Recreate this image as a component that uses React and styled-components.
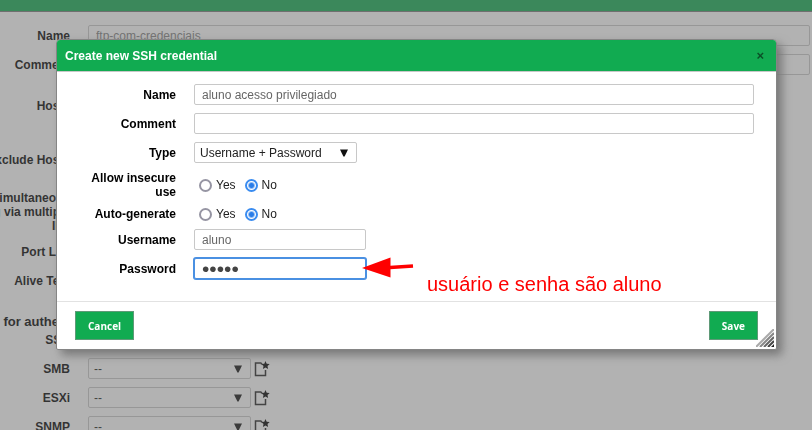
import React, { useState } from "react";
import styled, { createGlobalStyle, css } from "styled-components";

const scanners = ["SMB", "ESXi", "SNMP"];

const SelectField = ({ id, options }) => (
	<SelectWrap>
		<Select id={id}>
			{options.map((o) => (
				<option key={o}>{o}</option>
			))}
		</Select>
		<Arrow viewBox="0 0 8 8" aria-hidden="true">
			<path d="M0 0.5h8L4.6 7.5h-1.2z" fill="#111" />
		</Arrow>
	</SelectWrap>
);

const YesNo = ({ name, label }) => {
	const [value, setValue] = useState("No");

	return (
		<Row role="radiogroup" aria-labelledby={name}>
			<Label as="span" id={name}>
				{label}
			</Label>
			<Radios>
				{["Yes", "No"].map((o) => (
					<RadioLabel key={o}>
						<Radio
							type="radio"
							name={name}
							checked={value === o}
							onChange={() => setValue(o)}
						/>
						{o}
					</RadioLabel>
				))}
			</Radios>
		</Row>
	);
};

const NewIcon = () => (
	<svg width="16" height="16" viewBox="0 0 16 16" aria-hidden="true">
		<path
			d="M7.500 2H1.500v12.500h10V9M7.500 2v1.500"
			fill="none"
			stroke="#222"
			strokeWidth="1.500"
		/>
		<path
			d="M11.500 0l1.200 2.700 3 .3-2.200 2 .6 3-2.600-1.500-2.600 1.500.6-3-2.200-2 3-.3z"
			fill="#000"
		/>
	</svg>
);

const TargetForm = () => (
	<Page>
		<TopBar />
		<Form>
			<Rows>
				<PageRow>
					<Label htmlFor="target-name">Name</Label>
					<Input id="target-name" defaultValue="ftp-com-credenciais" $faded />
				</PageRow>
				<PageRow>
					<Label htmlFor="target-comment">Comment</Label>
					<Input id="target-comment" />
				</PageRow>
				<PageRow $tall>
					<Label as="span">Hosts</Label>
				</PageRow>
				<PageRow $tall>
					<Label as="span">Exclude Hosts</Label>
				</PageRow>
				<PageRow>
					<Label as="span">Allow simultaneous scanning via multiple IPs</Label>
				</PageRow>
				<PageRow>
					<Label as="span">Port List</Label>
				</PageRow>
				<PageRow>
					<Label as="span">Alive Test</Label>
				</PageRow>
			</Rows>
			<SectionTitle>Credentials for authenticated checks</SectionTitle>
			<Rows>
				<PageRow>
					<Label as="span">SSH</Label>
				</PageRow>
				{scanners.map((s) => (
					<PageRow key={s}>
						<Label htmlFor={s}>{s}</Label>
						<Credential>
							<SelectField id={s} options={["--"]} />
							<IconButton type="button" aria-label={`New ${s} credential`}>
								<NewIcon />
							</IconButton>
						</Credential>
					</PageRow>
				))}
			</Rows>
		</Form>
	</Page>
);

const App = () => (
	<>
		<GlobalStyle />
		<TargetForm />
		<Overlay>
			<Dialog role="dialog" aria-labelledby="dialog-title">
				<DialogHeader>
					<DialogTitle id="dialog-title">Create new SSH credential</DialogTitle>
					<Close type="button" aria-label="Close">
						×
					</Close>
				</DialogHeader>
				<DialogBody>
					<Row>
						<Label htmlFor="name">Name</Label>
						<Input id="name" defaultValue="aluno acesso privilegiado" />
					</Row>
					<Row>
						<Label htmlFor="comment">Comment</Label>
						<Input id="comment" />
					</Row>
					<Row>
						<Label htmlFor="type">Type</Label>
						<SelectField id="type" options={["Username + Password"]} />
					</Row>
					<YesNo name="insecure" label="Allow insecure use" />
					<YesNo name="autogenerate" label="Auto-generate" />
					<Row>
						<Label htmlFor="username">Username</Label>
						<Input id="username" defaultValue="aluno" $short />
					</Row>
					<Row>
						<Label htmlFor="password">Password</Label>
						<PasswordWrap>
							<Input
								id="password"
								type="password"
								defaultValue="aluno"
								$short
								$active
							/>
							<Note>
								<svg width="52" height="22" viewBox="0 0 52 22">
									<path d="M28 10.500L51 9" stroke="#fe0000" strokeWidth="3.500" />
									<path d="M0 11L28.500 0.500v20z" fill="#fe0000" />
								</svg>
								<NoteText>usuário e senha são aluno</NoteText>
							</Note>
						</PasswordWrap>
					</Row>
				</DialogBody>
				<DialogFooter>
					<Button type="button">Cancel</Button>
					<Button type="button">Save</Button>
					<Grip viewBox="0 0 18 18" aria-hidden="true">
						<path d="M0 18L18 0" stroke="#aaa" />
						<path d="M4 18L18 4" stroke="#888" />
						<path d="M8 18L18 8" stroke="#666" />
						<path d="M12 18L18 12" stroke="#444" />
						<path d="M15 18L18 15v3z" fill="#222" />
					</Grip>
				</DialogFooter>
			</Dialog>
		</Overlay>
	</>
);

export default App;

const GlobalStyle = createGlobalStyle`
	* {
		box-sizing: border-box;
	}
	body {
		margin: 0;
		background: #fff;
		color: #000;
		font: 12px/14px "Liberation Sans", Arial, sans-serif;
	}
	input, select, button {
		margin: 0;
		font: inherit;
	}
`;

const Page = styled.main`
	height: 100vh;
	overflow: hidden;
`;

const TopBar = styled.header`
	height: 12px;
	background: #11ab51;
	border-bottom: 1px solid #787878;
`;

/* scrolled sideways, so the labels run off the left edge */
const Form = styled.form`
	margin-left: -71px;
	padding: 13px 2px 0 0;
`;

const Rows = styled.div`
	display: flex;
	flex-direction: column;
	gap: 8px;
`;

const Row = styled.div`
	display: grid;
	grid-template-columns: 101px 1fr;
	column-gap: 18px;
	align-items: center;
`;

const PageRow = styled(Row)`
	grid-template-columns: 141px 1fr;
	min-height: ${(props) => (props.$tall ? "46px" : "21px")};
`;

const Label = styled.label`
	font-weight: bold;
	text-align: right;
`;

const SectionTitle = styled.h2`
	margin: 23px 0 0;
	font-size: 13px;
	line-height: 15px;
`;

const Input = styled.input`
	width: ${(props) => (props.$short ? "172px" : "100%")};
	height: 21px;
	padding: 0 7px;
	border: 1px solid #c8c8c8;
	border-radius: 2px;
	outline: none;
	background: #fff;
	color: ${(props) => (props.$faded ? "#808080" : "#666")};
	${(props) =>
		props.$active &&
		css`
			border-color: #4a90e2;
			box-shadow: 0 0 0 1px #4a90e2;
			color: #444;
			font-size: 21px;
		`}
`;

const SelectWrap = styled.div`
	display: grid;
	align-items: center;
	width: 163px;
	> * {
		grid-area: 1 / 1;
	}
`;

const Select = styled.select`
	appearance: none;
	width: 100%;
	height: 21px;
	padding: 0 5px;
	border: 1px solid #c8c8c8;
	border-radius: 2px;
	background: #fff;
	color: #222;
`;

const Arrow = styled.svg`
	width: 8px;
	height: 8px;
	margin-right: 9px;
	justify-self: end;
	pointer-events: none;
`;

const Credential = styled.div`
	display: flex;
	align-items: center;
	gap: 3px;
`;

const IconButton = styled.button`
	display: flex;
	padding: 0;
	border: 0;
	background: none;
`;

const Overlay = styled.div`
	position: fixed;
	inset: 0;
	padding: 39px 35px 0 56px;
	background: rgba(102, 102, 102, 0.5);
`;

const Dialog = styled.section`
	border: 1px solid #858585;
	border-radius: 4px 4px 2px 2px;
	background: #fff;
	box-shadow: 5px 5px 10px #787878;
`;

const DialogHeader = styled.header`
	display: flex;
	align-items: center;
	justify-content: space-between;
	height: 32px;
	padding: 0 12px 0 8px;
	border-bottom: 1px solid #c8c8c8;
	border-radius: 3px 3px 0 0;
	background: #11ab51;
`;

const DialogTitle = styled.h1`
	margin: 0;
	color: #fff;
	font-size: 12px;
`;

const Close = styled.button`
	padding: 0;
	border: 0;
	background: none;
	color: #0b4f27;
	font-size: 13px;
	font-weight: bold;
`;

const DialogBody = styled.div`
	display: flex;
	flex-direction: column;
	gap: 8px;
	padding: 12px 22px 22px 18px;
`;

const Radios = styled.div`
	display: flex;
	gap: 9px;
	padding-left: 5px;
`;

const RadioLabel = styled.label`
	display: flex;
	align-items: center;
	gap: 4px;
	color: #222;
`;

const Radio = styled.input`
	appearance: none;
	width: 13px;
	height: 13px;
	border: 2px solid #9695a3;
	border-radius: 50%;
	background: #fff;
	&:checked {
		border-color: #3a8cf0;
		background: radial-gradient(circle, #2a7de8 2px, #fff 4px);
	}
`;

const PasswordWrap = styled.div`
	position: relative;
	display: flex;
`;

/* the arrow lies over the right edge of the password box */
const Note = styled.div`
	position: absolute;
	top: -1px;
	left: 168px;
	display: flex;
	gap: 13px;
	pointer-events: none;
`;

const NoteText = styled.span`
	padding-top: 16px;
	color: #fe0000;
	font-size: 20px;
	line-height: 22px;
	white-space: nowrap;
`;

const DialogFooter = styled.footer`
	position: relative;
	display: flex;
	justify-content: space-between;
	padding: 9px 18px;
	border-top: 1px solid #e2e2e2;
`;

const Button = styled.button`
	height: 29px;
	padding: 0 12px;
	border: 1px solid #5f9a78;
	background: #11ab51;
	color: #fff;
	font: bold 10px "Open Sans", sans-serif;
`;

const Grip = styled.svg`
	position: absolute;
	right: 2px;
	bottom: 2px;
	width: 18px;
	height: 18px;
	stroke-width: 2px;
`;
